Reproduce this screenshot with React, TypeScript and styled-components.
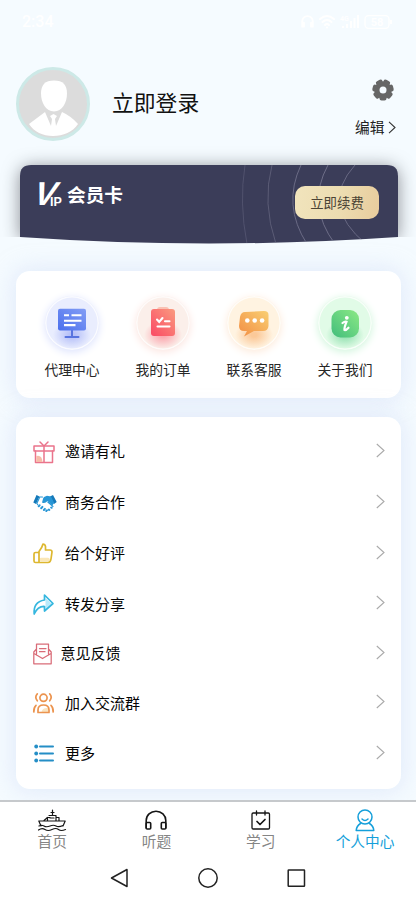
import React from 'react';
import styled, { createGlobalStyle } from 'styled-components';

const Global = createGlobalStyle`
  * { box-sizing: border-box; }
  body { margin: 0; background: #f5faff; font-family: "Noto Sans CJK SC", "Noto Sans", sans-serif; color: #111; }
  svg { display: block; overflow: visible; flex: none; }
`;
const Page = styled.div`
  width: 416px; height: 900px; overflow: hidden; display: flex; flex-direction: column;
  background: #f5fbff;
`;
const StatusBar = styled.div`
  height: 42px; padding: 1px 23px 0 22px; display: flex; align-items: center; justify-content: space-between;
  color: #fff; font: 500 16px/20px Roboto, sans-serif;
`;
const StatusIcons = styled.div`display: flex; align-items: center; gap: 5px;`;
const Profile = styled.header`
  height: 123px; padding: 25px 18px 0 16px; display: flex; align-items: flex-start;
`;
const LoginName = styled.div`margin: 19px 0 0 22px; font-size: 21.8px; line-height: 32px; flex: 1;`;
const ProfileActions = styled.div`
  width: 43px; padding-top: 12px; display: flex; flex-direction: column; gap: 16px;
  svg.gear { margin-left: 17px; }
`;
const EditLink = styled.div`
  display: flex; align-items: center; gap: 4px; width: 48px; font-size: 14.7px; line-height: 20px; white-space: nowrap; color: #222;
`;
const VipSection = styled.section`
  position: relative; height: 72px; margin: 0 18px 34px 20px; display: flex; align-items: flex-start; justify-content: space-between;
`;
const VipShadow = styled.div`
  position: absolute; inset: 0; border-radius: 11px 11px 0 0; box-shadow: 0 2px 17px rgba(30,32,38,.5);
  clip-path: inset(-32px -20px 0 -20px);
`;
const VipArt = styled.svg`position: absolute; left: 0; top: 0;`;
const VipTitle = styled.div`
  position: relative; display: flex; align-items: flex-end; margin: 14px 0 0 11px; height: 28px; color: #fff;
`;
const BigV = styled.span`
  font: 700 33px/28px "Liberation Sans", sans-serif; width: 19px; transform: translateY(1px) skewX(-20deg);
  transform-origin: 0 25px;
`;
const SmallIp = styled.span`font: 700 12.5px/12px "Liberation Sans", sans-serif; width: 15px; transform: translateY(.5px);`;
const VipName = styled.span`font-size: 18.7px; font-weight: 700; line-height: 26px; margin-left: 2px; transform: translateY(-.5px);`;
const Renew = styled.button`
  position: relative; width: 84px; height: 33px; margin: 21px 19px 0 0; padding: 0; border: 0; border-radius: 10px;
  background: linear-gradient(100deg, #f1e4bd, #ecdcb0 55%, #e8cc9d); color: #4b4435;
  font: 13.4px/33px "Noto Sans CJK SC", sans-serif;
`;
const Panel = styled.section`
  width: 385px; margin-left: 16px; border-radius: 14px; background: #fff; box-shadow: 0 0 22px 2px rgba(205,218,246,.5);
  flex: none;
`;
const Shortcuts = styled(Panel)`
  height: 127px; padding: 25px 10px 0 10.5px; display: grid; grid-template-columns: repeat(4, 91px); margin-bottom: 19px;
`;
const Shortcut = styled.div`
  display: flex; flex-direction: column; align-items: center; font-size: 13.8px; line-height: 20px; gap: 9px; color: #272727;
`;
const Bubble = styled.div<{ $bg: string; $glow: string; $halo: string }>`
  width: 54px; height: 54px; border-radius: 50%; display: grid; place-items: center;
  background: radial-gradient(ellipse 19px 14px at 50% 72%, ${p => p.$glow} 15%, transparent), ${p => p.$bg};
  box-shadow: inset 0 0 0 1.5px rgba(255,255,255,.75), 0 2px 8px ${p => p.$halo};
`;
const Menu = styled(Panel)`height: 372px; padding-top: 9px;`;
const MenuRow = styled.div<{ $height: number }>`
  height: ${p => p.$height}px; padding: 0 16px 0 17px; display: flex; align-items: center; font-size: 15px; color: #050505;
`;
const MenuIcon = styled.span`width: 24px; display: flex;`;
const MenuLabel = styled.span<{ $gap: number }>`flex: 1; margin-left: ${p => p.$gap}px; padding-bottom: 1.5px;`;
const BottomArea = styled.footer`
  margin-top: auto; height: 100px; flex: none; background: #fff; border-top: 2px solid #c6c9cc;
`;
const Tabs = styled.nav`display: grid; grid-template-columns: repeat(4, 104.3px); height: 52px;`;
const Tab = styled.div<{ $active?: boolean }>`
  display: flex; flex-direction: column; align-items: center; padding-top: 8px;
  font-size: 14.7px; line-height: 20px; color: ${p => (p.$active ? '#159fda' : '#858585')};
  svg { color: ${p => (p.$active ? '#159fda' : '#151515')}; margin-bottom: -1.5px; }
`;
const SystemKeys = styled.div`display: flex; justify-content: center; align-items: center; gap: 69px; height: 47px;`;

const stroke = { fill: 'none', stroke: 'currentColor', strokeWidth: 1.5, strokeLinecap: 'round' as const, strokeLinejoin: 'round' as const };

const Chevron = () => (
  <svg width="9" height="18" viewBox="0 0 9 18" fill="none" stroke="#aaa" strokeWidth="1.1"><path d="M.8 1 8 7.5.8 14" /></svg>
);

const Avatar = () => (
  <svg width="74" height="74" viewBox="0 0 74 74">
    <circle cx="37" cy="37" r="35.5" fill="#dcdcdc" stroke="#cde9e7" strokeWidth="3" />
    <path d="M38 13.5C47 13.5 51 18 51 26.5 51 36 46 44.5 38 44.5S25 36 25 26.5C25 18 29 13.5 38 13.5Z" fill="#fff" />
    <path d="M29 45 13 57C18 65 27 69 37 69S57 65 62 57Q55 49 46 45L40 59 39 52 41 49 37.5 47 34 49 36 52 35 59Z" fill="#fff" />
  </svg>
);

const Gear = () => (
  <svg className="gear" width="22" height="22" viewBox="0 0 22 22">
    <g fill="#666">
      <circle cx="11" cy="11" r="8.6" />
      {[26, 77, 129, 180, 231, 283, 334].map(a => <rect key={a} x="7.5" y="0.4" width="7" height="7" rx="2" transform={`rotate(${a} 11 11)`} />)}
    </g>
    <circle cx="11" cy="11" r="3.5" fill="#f5fbff" />
  </svg>
);

const boardIcon = (
  <svg width="28" height="30" viewBox="0 0 28 30">
    <defs><linearGradient id="blue" x1="1" y1="0" x2="0" y2="1"><stop stopColor="#829df5" /><stop offset="1" stopColor="#4c70ed" /></linearGradient></defs>
    <path d="M14 21v7.5M7.5 29h13" stroke="#5874df" strokeWidth="2" strokeLinecap="round" />
    <rect y=".8" width="28" height="21.7" rx="2" fill="url(#blue)" />
    <path d="M6 7.3h5m2.5 0h10M6 12.8H23.5M6 17.1H17.5" stroke="#fff" strokeWidth="2.1" />
  </svg>
);
const orderIcon = (
  <svg width="24" height="30" viewBox="0 0 24 30">
    <defs><linearGradient id="red" x1="1" y1="0" x2="0" y2="1"><stop stopColor="#fa9b80" /><stop offset="1" stopColor="#fa4964" /></linearGradient></defs>
    <rect x="6" y="-1" width="12" height="6" rx="3" fill="#fac1b3" />
    <rect y="1" width="24" height="27" rx="3" fill="url(#red)" />
    <path d="m6 11.5 2.2 2.5 3.3-4M14 13.2h4.5M6.5 18.5H18.5" fill="none" stroke="#fff" strokeWidth="2.1" strokeLinecap="round" />
  </svg>
);
const chatIcon = (
  <svg width="30" height="27" viewBox="0 0 30 27">
    <defs><linearGradient id="orange" x1="1" y1="0" x2="0" y2="1"><stop stopColor="#f9cf73" /><stop offset="1" stopColor="#f28d43" /></linearGradient></defs>
    <path d="M6 2 25 1Q30 1 29.5 6V16Q29 21 24 21H15L5 26.5Q7 23 8 21H5Q0 21 0 16L1 7Q2 2 6 2Z" fill="url(#orange)" />
    <g fill="#fff"><circle cx="8.3" cy="10.5" r="2.3" /><circle cx="15.7" cy="10.5" r="2.3" /><circle cx="23.1" cy="10.5" r="2.3" /></g>
  </svg>
);
const infoIcon = (
  <svg width="28" height="28" viewBox="0 0 28 28">
    <defs><linearGradient id="green" x1="1" y1="0" x2="0" y2="1"><stop stopColor="#8ce985" /><stop offset="1" stopColor="#41bd7c" /></linearGradient></defs>
    <rect x=".5" y="1" width="27.5" height="27.5" rx="9" fill="url(#green)" />
    <circle cx="15.8" cy="8.8" r="1.9" fill="#fff" />
    <path d="M11.5 14Q14 12 15.5 12.8 13 19 13.5 21 15 21.5 17.5 18.7" fill="none" stroke="#fff" strokeWidth="2.2" strokeLinecap="round" />
  </svg>
);

const shortcuts = [
  { label: '代理中心', bg: '#e9edfe', glow: '#b7c1f8', halo: '#dce2fd', icon: boardIcon },
  { label: '我的订单', bg: '#fbefea', glow: '#fba9b0', halo: '#fce4df', icon: orderIcon },
  { label: '联系客服', bg: '#fff3e1', glow: '#fbc999', halo: '#fdeada', icon: chatIcon },
  { label: '关于我们', bg: '#e1fbe7', glow: '#97e2b3', halo: '#d0f5dc', icon: infoIcon },
];

const Gift = () => (
  <svg width="22" height="24" viewBox="0 0 22 24" {...stroke} stroke="#ea748c">
    <rect x="1" y="6" width="20" height="5" /><path d="M2.5 11V22.5H19.5V11M11 6V22M11 6 7 2M11 6l4-4" />
    <path d="M3.3 22V16Q9 14.5 9.5 22Z" fill="#f7bca9" stroke="none" />
  </svg>
);
const Handshake = () => (
  <svg width="24" height="20" viewBox="0 0 24 20">
    <path d="M3.5 2 .3 9.5 3 11 6.5 3.5ZM20 2l3.7 7L21 11 17 3.5Z" fill="#1579b9" />
    <path d="M11 4 14 2.8 18 3.5 21.2 10 19.2 12.5 14.5 8Q12 11 9 9.5L10.2 5.2Z" fill="#2695d5" />
    <path d="M9.5 4 6.8 4 3.8 10.5 5 12M14.8 9 20 13.5" fill="none" stroke="#2695d5" strokeWidth="1.1" strokeLinecap="round" />
    <path d="m5.7 13.3.9-1M8.2 15.2l1.2-1.3M10.9 17l1-1.1M13.3 18l.6-.6M15.8 16.6l.5.4M18.2 14.5l.4.3" fill="none" stroke="#2695d5" strokeWidth="2" strokeLinecap="round" />
  </svg>
);
const Thumb = () => (
  <svg width="20" height="21" viewBox="0 0 20 21" {...stroke} stroke="#ddb72f" strokeWidth="1.7">
    <path d="M8 16.5H15" stroke="#fae7b7" strokeWidth="3.5" />
    <path d="M6 19.5H15Q17.5 19.5 18 16L19 9Q19 7 17 7H12.5V3.5Q12 1 10 1 9 5 6 8.5V19.5H2.5Q1 19.5 1 18V11Q1 9.5 2.5 9.5H6" />
  </svg>
);
const Share = () => (
  <svg width="21" height="21" viewBox="0 0 21 21" {...stroke} stroke="#36b7df" strokeWidth="1.7">
    <path d="m12.5 4 5.8 5.5-5.8 5.3Z" fill="#b8eafb" stroke="none" />
    <path d="M11.5 1 20 9.5 11.5 17V12.5Q5 12 1.2 20 0 8 11.5 6Z" />
  </svg>
);
const Letter = () => (
  <svg width="19" height="22" viewBox="0 0 19 22" {...stroke} stroke="#d96c78" strokeWidth="1.25">
    <path d="M3.5 12V1H15.5V12M3.5 6 .8 9V20.8H18.2V9L15.5 6M1 10.5 9.5 15.5 18 10.5" /><path d="M6.5 5.5H13M6.5 8.7H12" />
  </svg>
);
const Group = () => (
  <svg width="21" height="22" viewBox="0 0 21 22" {...stroke} stroke="#ec944f" strokeWidth="1.7">
    <path d="M8.5 20Q9.5 15.5 15 16V20Z" fill="#fae4c0" stroke="none" />
    <circle cx="10.5" cy="5.8" r="3.6" /><path d="M5 20.5V18Q5 13 10.5 13T16 18V20.5ZM4.3 1.8Q1.3 5 4.3 8.8M16.7 1.8Q19.7 5 16.7 8.8M3 13.3Q.6 15.5.8 20M18 13.3Q20.4 15.5 20.2 20" />
  </svg>
);
const More = () => (
  <svg width="20" height="19" viewBox="0 0 20 19" stroke="#248ec6" strokeWidth="2">
    {[2.5, 9.5, 16.5].map(y => <g key={y}><circle cx="3.2" cy={y} r="1.9" fill="#248ec6" stroke="none" /><path d={`M7 ${y}H20`} strokeLinecap="round" /></g>)}
  </svg>
);

const menu = [
  { label: '邀请有礼', icon: <Gift />, height: 51, gap: 8 },
  { label: '商务合作', icon: <Handshake />, height: 51, gap: 8 },
  { label: '给个好评', icon: <Thumb />, height: 51, gap: 8 },
  { label: '转发分享', icon: <Share />, height: 50, gap: 8 },
  { label: '意见反馈', icon: <Letter />, height: 49, gap: 3.5 },
  { label: '加入交流群', icon: <Group />, height: 50, gap: 8 },
  { label: '更多', icon: <More />, height: 51, gap: 8 },
];

const Ship = () => (
  <svg width="28" height="22" viewBox="0 0 28 22" {...stroke} strokeWidth="1.2">
    <path d="M14.5 0V5M13 2.5h3M11 5.5h7V11M9 7.5h3M6 10.5 9.5 7.5V11M18 7.5h3V11M.8 11H27.2L25 16M.8 11 3 16M1 16Q3.5 14.5 6 16T12 16 18 16 25 15.5M.5 20Q4 17.5 7 19.5T14 19.5 20.5 19.5 27.5 19.5" />
    <path d="M12 8h4" />
  </svg>
);
const Headphones = () => (
  <svg width="22" height="22" viewBox="0 0 22 22" {...stroke} strokeWidth="1.6">
    <path d="M1.2 18V10.5A9.8 9.3 0 0 1 20.8 10.5V18" /><rect x="1.2" y="12.5" width="4.5" height="6.5" rx="1" /><rect x="16.3" y="12.5" width="4.5" height="6.5" rx="1" />
  </svg>
);
const Calendar = () => (
  <svg width="20" height="22" viewBox="0 0 20 22" {...stroke} strokeWidth="1.3">
    <rect x="1" y="3" width="17.5" height="16" rx="1.2" /><path d="M5.5 1V5M14 1V5" /><path d="m6 11.5 3 3 5-5" strokeWidth="1.7" />
  </svg>
);
const Person = () => (
  <svg width="20" height="22" viewBox="0 0 20 22" {...stroke}>
    <circle cx="10" cy="7" r="7" /><path d="M7 9Q10 12 13 9M5.5 13.5Q1.5 16 1.2 20.5H18.8Q18.5 16 14.5 13.5" />
  </svg>
);

export default function App() {
  return (
    <Page>
      <Global />
      <StatusBar>
        <span>2:34</span>
        <StatusIcons>
          <svg width="13" height="14" viewBox="0 0 22 22" {...stroke} strokeWidth="3"><path d="M2 18V10A9 9 0 0 1 20 10V18M2 12h3v7H2m18-7h-3v7h3" /></svg>
          <svg width="16" height="14" viewBox="0 0 16 14" {...stroke} strokeWidth="2"><path d="M1 4Q8-2 15 4M3.5 7Q8 3 12.5 7M6 10q2-2 4 0M8 12.5v.1" /></svg>
          <svg width="19" height="14" viewBox="0 0 19 14">
            <text x="0" y="6" fontSize="7" fontWeight="700" fill="#fff">4G</text>
            <path d="M3 13v-2M7 13V9M11 13V6M14.5 13V3M18 13V0" stroke="#fff" strokeWidth="2" />
          </svg>
          <svg width="29" height="14" viewBox="0 0 29 14">
            <rect x="1" y=".7" width="24" height="12.6" rx="3.5" fill="none" stroke="#fff" strokeWidth="1.3" /><path d="M27 5v4" stroke="#fff" strokeWidth="2" />
            <text x="13" y="11" fontSize="11" fontWeight="700" fill="#fff" textAnchor="middle">58</text>
          </svg>
        </StatusIcons>
      </StatusBar>
      <Profile>
        <Avatar />
        <LoginName>立即登录</LoginName>
        <ProfileActions>
          <Gear />
          <EditLink>编辑<svg width="8" height="13" viewBox="0 0 8 13" fill="none" stroke="#333" strokeWidth="1.1"><path d="m1 .8 6 5.7-6 5.7" /></svg></EditLink>
        </ProfileActions>
      </Profile>
      <VipSection>
        <VipShadow />
        <VipArt width="378" height="79" viewBox="0 0 378 79">
          <defs><clipPath id="card"><path d="M0 11Q0 0 11 0H367Q378 0 378 11V72Q189 85 0 72Z" /></clipPath></defs>
          <g clipPath="url(#card)">
            <rect width="378" height="79" fill="#3b3d59" />
            <g fill="none" stroke="#7b7b94" strokeWidth="1">
              <path d="M225 0Q219 38 227 79" opacity=".35" /><path d="M252 0Q242 38 256 79" opacity=".5" />
              <path d="M281 0Q262 40 287 79" opacity=".75" /><path d="M308 0Q286 40 315 79" opacity=".8" />
              <path d="M335 0Q299 40 346 79" opacity=".7" />
            </g>
          </g>
        </VipArt>
        <VipTitle><BigV>V</BigV><SmallIp>IP</SmallIp><VipName>会员卡</VipName></VipTitle>
        <Renew>立即续费</Renew>
      </VipSection>
      <Shortcuts>
        {shortcuts.map(s => (
          <Shortcut key={s.label}><Bubble $bg={s.bg} $glow={s.glow} $halo={s.halo}>{s.icon}</Bubble>{s.label}</Shortcut>
        ))}
      </Shortcuts>
      <Menu>
        {menu.map(m => (
          <MenuRow key={m.label} $height={m.height}>
            <MenuIcon>{m.icon}</MenuIcon><MenuLabel $gap={m.gap}>{m.label}</MenuLabel><Chevron />
          </MenuRow>
        ))}
      </Menu>
      <BottomArea>
        <Tabs>
          <Tab><Ship />首页</Tab>
          <Tab><Headphones />听题</Tab>
          <Tab><Calendar />学习</Tab>
          <Tab $active><Person />个人中心</Tab>
        </Tabs>
        <SystemKeys>
          <svg width="19" height="20" viewBox="0 0 19 20" {...stroke} stroke="#222"><path d="M17 1.5V18.5L1.5 10Z" /></svg>
          <svg width="20" height="20" viewBox="0 0 20 20" {...stroke} stroke="#222"><circle cx="10" cy="10" r="9.2" /></svg>
          <svg width="19" height="20" viewBox="0 0 19 20" {...stroke} stroke="#222"><rect x="1.2" y="2" width="16.3" height="16.3" rx=".5" /></svg>
        </SystemKeys>
      </BottomArea>
    </Page>
  );
}
